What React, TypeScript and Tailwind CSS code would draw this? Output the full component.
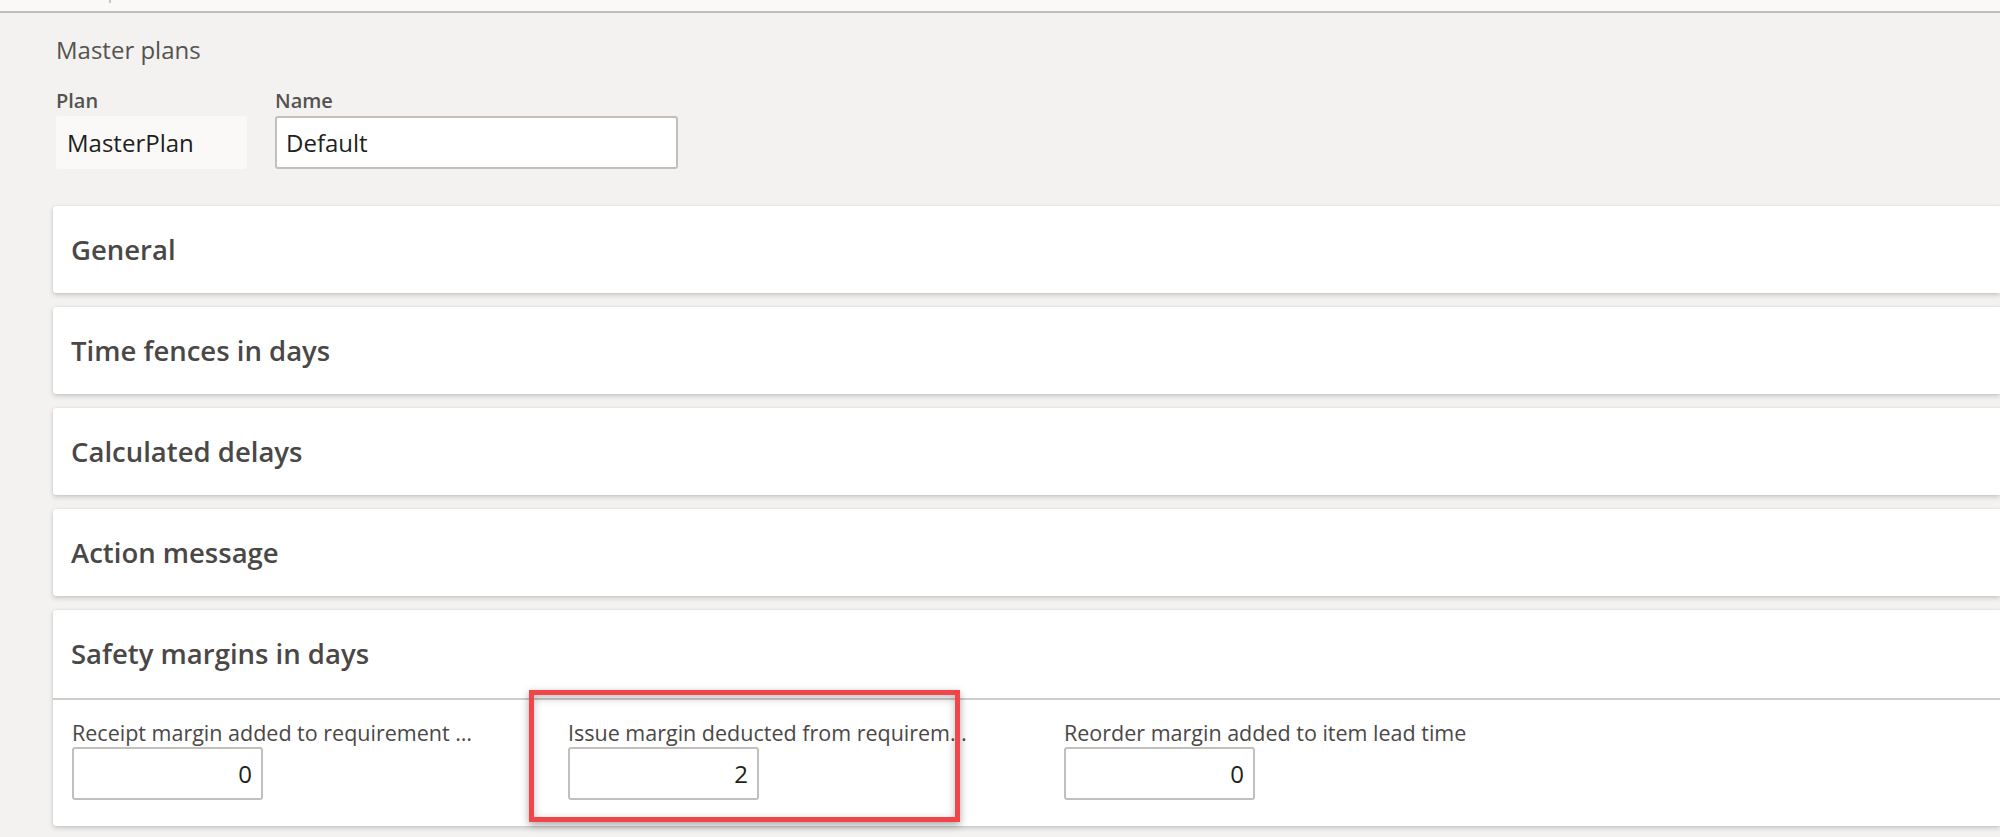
import React from "react";

const font = { fontFamily: '"Open Sans", "Noto Sans", sans-serif' };

const sections = ["General", "Time fences in days", "Calculated delays", "Action message"];

const margins = [
  { label: "Receipt margin added to requirement date", value: "0" },
  { label: "Issue margin deducted from requirement date", value: "2", marked: true },
  { label: "Reorder margin added to item lead time", value: "0" },
];

const SectionHeader = ({ title, tall }: { title: string; tall?: boolean }) => (
  <div className={tall ? "flex h-[88px] items-center pl-[18px]" : "flex h-[87px] items-center pl-[18px]"}>
    <span className="text-[27.5px] font-semibold text-[#4a4846]">{title}</span>
  </div>
);

const NumberField = ({ label, value, marked }: { label: string; value: string; marked?: boolean }) => (
  <div className="relative flex w-[496px] shrink-0 flex-col">
    <label className="h-[28px] w-[408px] truncate text-[21.5px] leading-[28px] text-[#4a4846]">{label}</label>
    <div className="flex h-[53px] w-[191px] items-center justify-end rounded-[3px] border-2 border-[#c2bfbc] bg-white pr-[9px] text-[24px] text-[#201f1e]">
      {value}
    </div>
    {/* annotation box drawn over the screenshot */}
    {marked && (
      <div className="pointer-events-none absolute left-[-39px] top-[-29px] h-[132px] w-[431px] border-[5px] border-[#f2454a] shadow-[0_3px_8px_rgba(0,0,0,0.35),inset_0_3px_8px_rgba(0,0,0,0.25)]" />
    )}
  </div>
);

export default function App() {
  return (
    <div className="h-[837px] w-[2000px] overflow-hidden bg-[#f3f2f1]" style={font}>
      <div className="flex h-[13px] border-b-2 border-[#c0bdba] bg-[#faf9f8] pl-[109px]">
        <div className="h-[3px] w-[2px] bg-[#c8c6c4]" />
      </div>

      <div className="pl-[56px] pt-[20px]">
        <div className="text-[24px] leading-[34px] text-[#55534f]">Master plans</div>
        <div className="mt-[22px] flex gap-[28px]">
          <div className="flex flex-col">
            <span className="text-[20px] font-semibold leading-[24px] text-[#55534f]">Plan</span>
            <div className="mt-[3px] flex h-[53px] w-[191px] items-center rounded-[3px] bg-[#faf9f8] pl-[11px] text-[24px] text-[#201f1e]">
              MasterPlan
            </div>
          </div>
          <div className="flex flex-col">
            <span className="text-[20px] font-semibold leading-[24px] text-[#55534f]">Name</span>
            <div className="mt-[3px] flex h-[53px] w-[403px] items-center rounded-[3px] border-2 border-[#c2bfbc] bg-white pl-[9px] text-[24px] text-[#201f1e]">
              Default
            </div>
          </div>
        </div>
      </div>

      <div className="mt-[37px] flex flex-col gap-[14px] pl-[53px]">
        {sections.map((s) => (
          <div key={s} className="rounded-l-[3px] bg-white shadow-[0_2px_5px_rgba(0,0,0,0.18),0_0_2px_rgba(0,0,0,0.08)]">
            <SectionHeader title={s} />
          </div>
        ))}
        <div className="relative rounded-l-[3px] bg-white shadow-[0_2px_5px_rgba(0,0,0,0.18),0_0_2px_rgba(0,0,0,0.08)]">
          <SectionHeader title="Safety margins in days" tall />
          <div className="h-[2px] bg-[#cfcdca]" />
          <div className="flex pb-[26px] pl-[19px] pt-[19px]">
            {margins.map((m) => (
              <NumberField key={m.label} {...m} />
            ))}
          </div>
        </div>
      </div>
    </div>
  );
}
